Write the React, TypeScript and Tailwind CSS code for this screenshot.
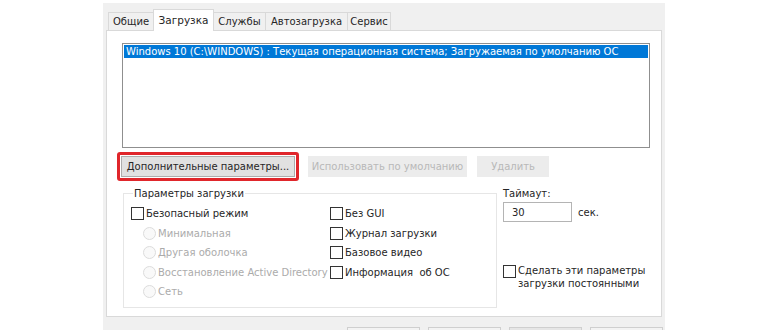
import clsx from 'clsx'

function Check({ label, className }: { label: string; className?: string }) {
  return (
    <div className={clsx('flex items-center h-[19.5px]', className)}>
      <span className="w-[13px] h-[13px] border border-[#333] bg-white shrink-0" />
      <span className="ml-[2px] text-[#262626] whitespace-nowrap">{label}</span>
    </div>
  )
}

function Radio({ label }: { label: string }) {
  return (
    <div className="flex items-center h-[19.5px] pl-[12px]">
      <span className="w-[13px] h-[13px] rounded-full border border-[#dcdcdc] bg-[#f9f9f9] shrink-0" />
      <span className="ml-[2px] text-[#ababab] whitespace-nowrap">{label}</span>
    </div>
  )
}

const TABS = [
  { name: 'Общие', w: 'w-[46px]' },
  { name: 'Загрузка', w: 'w-[61px]', active: true },
  { name: 'Службы', w: 'w-[53px]' },
  { name: 'Автозагрузка', w: 'w-[83px]' },
  { name: 'Сервис', w: 'w-[44px]' },
]

export default function App() {
  return (
    <div className="w-[770px] h-[330px] bg-white overflow-hidden pt-[3px] pl-[103px] font-['DejaVu_Sans',sans-serif] text-[10px] leading-[13px] text-[#262626]">
      <div className="w-[562px] h-[327px] bg-[#f0f0f0] pl-[3px] pt-[6px]">

        {/* Вкладки */}
        <div className="flex items-end h-[22px] pl-[2px]">
          {TABS.map(t => (
            <div key={t.name}
              className={clsx(
                'flex items-center justify-center border border-[#d9d9d9] -ml-px first:ml-0',
                t.w,
                t.active ? 'h-[22px] bg-white border-b-0 relative z-10 text-[10.5px]' : 'h-[19px] bg-[#f0f0f0]'
              )}>
              {t.name}
            </div>
          ))}
        </div>

        {/* Панель */}
        <div className="w-[556px] h-[287px] -mt-px border border-[#d9d9d9] bg-white">
          <div className="ml-[15px] mt-[12px] w-[528px] h-[105px] border border-[#8f8f8f] p-[1px]">
            <div className="h-[13px] bg-[#0078d7] text-white pl-[2px] whitespace-nowrap">
              Windows 10 (C:\WINDOWS) : Текущая операционная система; Загружаемая по умолчанию ОС
            </div>
          </div>

          <div className="flex items-center mt-[4px] ml-[10px]">
            <div className="border-[3px] border-[#e0262b] rounded-[3px] p-[1px]">
              <button className="w-[174px] h-[21px] bg-[#e1e1e1] border border-[#adadad] text-[#262626]">
                Дополнительные параметры...
              </button>
            </div>
            <button disabled className="ml-[9px] w-[159px] h-[21px] bg-[#ececec] text-[#b8b8b8]">
              Использовать по умолчанию
            </button>
            <button disabled className="ml-[10px] w-[72px] h-[21px] bg-[#ececec] text-[#b8b8b8]">
              Удалить
            </button>
          </div>

          <div className="flex mt-[6px]">
            <fieldset className="ml-[16px] w-[374px] h-[121px] border border-[#e6e6e6] pl-[7px] pt-[4px]">
              <legend className="ml-[2px] px-[1px] leading-[13px]">Параметры загрузки</legend>
              <div className="flex">
                <div className="w-[199px]">
                  <Check label="Безопасный режим" />
                  <Radio label="Минимальная" />
                  <Radio label="Другая оболочка" />
                  <Radio label="Восстановление Active Directory" />
                  <Radio label="Сеть" />
                </div>
                <div>
                  <Check label="Без GUI" />
                  <Check label="Журнал загрузки" />
                  <Check label="Базовое видео" />
                  <Check label={'Информация\u00a0 об ОС'} />
                </div>
              </div>
            </fieldset>

            <div className="ml-[6px]">
              <p>Таймаут:</p>
              <div className="flex items-center mt-[2px]">
                <div className="w-[69px] h-[20px] border border-[#b4b4b4] pl-[8px] flex items-center">30</div>
                <span className="ml-[6px]">сек.</span>
              </div>
              <div className="flex items-start mt-[42px]">
                <span className="mt-[1px] w-[13px] h-[13px] border border-[#333] bg-white shrink-0" />
                <span className="ml-[2px]">Сделать эти параметры<br />загрузки постоянными</span>
              </div>
            </div>
          </div>
        </div>

        {/* Кнопки диалога */}
        <div className="flex justify-end gap-[8px] pr-[2px] mt-[10px]">
          {[0, 1, 2, 3].map(i => (
            <div key={i} className={clsx('w-[73px] h-[22px] border border-[#cfcfcf]', i === 2 ? 'bg-[#e6e6e6]' : 'bg-[#f3f3f3]')} />
          ))}
        </div>
      </div>
    </div>
  )
}
